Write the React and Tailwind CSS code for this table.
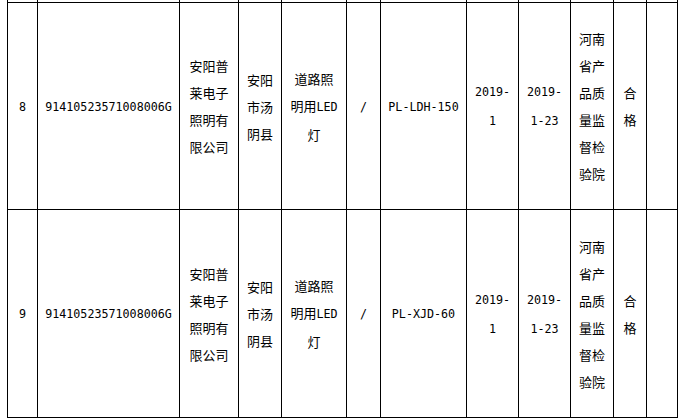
import React from 'react';

const CJK = { fontFamily: '"Noto Sans CJK SC", "Noto Sans", sans-serif' };

// latin bits are monospace in the source (half-width digits)
const Latin = ({ children }) => (
    <span className="text-[11.7px]" style={{ fontFamily: '"DejaVu Sans Mono", "Liberation Mono", monospace' }}>{children}</span>
);

const Cell = ({ lines = [] }) => (
    <div className="bg-white flex flex-col items-center justify-center text-[13px] leading-[27px] text-black text-center">
        {lines.map((line, i) => (
            <div key={i} className="whitespace-nowrap">{line}</div>
        ))}
    </div>
);

const rows = [
    { no: '8', model: 'PL-LDH-150' },
    { no: '9', model: 'PL-XJD-60' },
];

const App = () => {
    return (
        <div className="w-[682px] h-[418px] bg-white overflow-hidden" style={CJK}>
            <div className="ml-[7px] w-[671px] bg-black px-px pb-px grid grid-cols-[29px_141px_58px_42px_64px_33px_85px_51px_51px_42px_32px_30px] grid-rows-[2px_206px_207px] gap-px">
                {/* bottom sliver of the previous row */}
                {Array.from({ length: 12 }).map((_, i) => (
                    <div key={`top-${i}`} className="bg-white" />
                ))}

                {rows.map(row => (
                    <React.Fragment key={row.no}>
                        <Cell lines={[<Latin>{row.no}</Latin>]} />
                        <Cell lines={[<Latin>91410523571008006G</Latin>]} />
                        <Cell lines={['安阳普', '莱电子', '照明有', '限公司']} />
                        <Cell lines={['安阳', '市汤', '阴县']} />
                        <Cell lines={['道路照', <>明用<Latin>LED</Latin></>, '灯']} />
                        <Cell lines={[<Latin>/</Latin>]} />
                        <Cell lines={[<Latin>{row.model}</Latin>]} />
                        <Cell lines={[<Latin>2019-</Latin>, <Latin>1</Latin>]} />
                        <Cell lines={[<Latin>2019-</Latin>, <Latin>1-23</Latin>]} />
                        <Cell lines={['河南', '省产', '品质', '量监', '督检', '验院']} />
                        <Cell lines={['合', '格']} />
                        <Cell />
                    </React.Fragment>
                ))}
            </div>
        </div>
    );
};

export default App;
